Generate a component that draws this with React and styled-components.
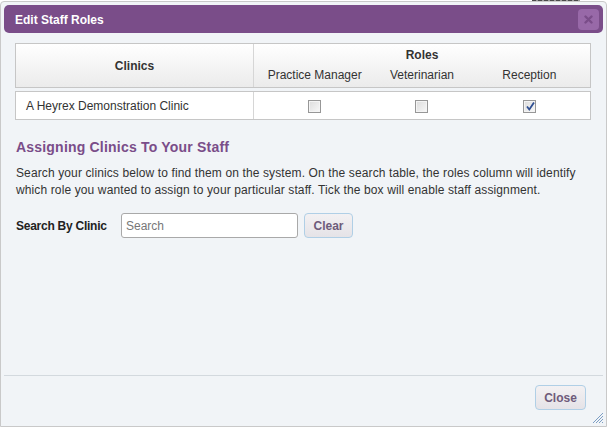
import React from "react";
import styled, { createGlobalStyle } from "styled-components";

const Global = createGlobalStyle`
  html, body { margin: 0; padding: 0; background: #ffffff; }
  body { font-family: "Liberation Sans", Arial, sans-serif; font-size: 12px; color: #333; }
  * { box-sizing: border-box; }
`;

const Page = styled.div`
  position: relative;
  width: 607px;
  height: 427px;
  padding-top: 1px;
  overflow: hidden;
`;

const Behind = styled.div`
  position: absolute;
  top: 0;
  left: 532px;
  width: 48px;
  height: 2px;
  background: repeating-linear-gradient(90deg, #4a4a4a 0 4px, #9a9a9a 4px 6px);
`;

const Dialog = styled.div`
  position: relative;
  width: 607px;
  height: 426px;
  border: 1px solid #c9c9c9;
  border-radius: 4px 4px 0 0;
  background: #f1f4f7;
  padding: 3px;
  display: flex;
  flex-direction: column;
`;

const TitleBar = styled.div`
  height: 28px;
  border-radius: 5px;
  background: #7a4d89;
  display: flex;
  align-items: center;
  justify-content: space-between;
  padding: 0 4px 0 11px;
  flex-shrink: 0;
`;

const Title = styled.span`
  color: #ffffff;
  font-weight: bold;
  font-size: 12px;
  margin-top: 1px;
`;

const CloseX = styled.div`
  width: 21px;
  height: 21px;
  border-radius: 4px;
  background: #9869a8;
  display: flex;
  align-items: center;
  justify-content: center;
`;

const Content = styled.div`
  flex: 1;
  padding: 10px 12px 0 11px;
  display: flex;
  flex-direction: column;
`;

const HeaderBox = styled.div`
  height: 45px;
  border: 1px solid #c6c6c6;
  background: linear-gradient(#ffffff, #ebebeb);
  display: grid;
  grid-template-columns: 238px 1fr;
`;

const HeadCell = styled.div`
  display: flex;
  align-items: center;
  justify-content: center;
  font-weight: bold;
  color: #333;
  border-right: ${(p) => (p.$divider ? "1px solid #d6d6d6" : "none")};
`;

const RolesHead = styled.div`
  display: flex;
  flex-direction: column;
  align-items: stretch;
  padding: 4px 7px 0;
`;

const RolesTitle = styled.div`
  text-align: center;
  font-weight: bold;
  color: #333;
  line-height: 15px;
`;

const RoleCols = styled.div`
  display: grid;
  grid-template-columns: repeat(3, 1fr);
  margin-top: 5px;
`;

const RoleLabel = styled.div`
  text-align: center;
  color: #333;
  line-height: 15px;
`;

const BodyRow = styled.div`
  margin-top: 3px;
  height: 29px;
  border: 1px solid #c6c6c6;
  background: #ffffff;
  display: grid;
  grid-template-columns: 238px 1fr;
`;

const ClinicCell = styled.div`
  display: flex;
  align-items: center;
  padding-left: 10px;
  color: #333;
  border-right: 1px solid #d6d6d6;
`;

const CheckCols = styled.div`
  display: grid;
  grid-template-columns: repeat(3, 1fr);
  padding: 0 7px;
  align-items: center;
`;

const CheckWrap = styled.div`
  display: flex;
  justify-content: center;
  padding-top: 1px;
`;

const Box = styled.span`
  position: relative;
  width: 13px;
  height: 13px;
  border: 1px solid #979797;
  background: linear-gradient(135deg, #dcdcdc, #f8f8f8);
  box-shadow: inset 0 0 0 1px #f4f4f4;
  display: block;
`;

const CheckMark = styled.svg`
  position: absolute;
  left: 1px;
  top: 0px;
`;

const Heading = styled.h3`
  margin: 18px 0 0 1px;
  font-size: 14px;
  line-height: 18px;
  font-weight: bold;
  letter-spacing: 0.2px;
  color: #7a4d89;
`;

const Para = styled.p`
  margin: 9px 0 0 1px;
  font-size: 12px;
  line-height: 17px;
  letter-spacing: 0.12px;
  color: #333;
`;

const SearchRow = styled.div`
  margin: 14px 0 0 1px;
  display: flex;
  align-items: center;
`;

const SearchLabel = styled.label`
  width: 105px;
  font-weight: bold;
  letter-spacing: -0.25px;
  color: #222;
`;

const Input = styled.input`
  width: 177px;
  height: 25px;
  border: 1px solid #a9a9a9;
  border-radius: 3px;
  padding: 0 4px;
  font-family: "Liberation Sans", Arial, sans-serif;
  font-size: 12px;
  color: #333;
  background: #fff;
  &::placeholder { color: #777; }
`;

const Button = styled.button`
  margin-left: ${(p) => p.$ml || 0}px;
  height: 25px;
  width: ${(p) => p.$w}px;
  border: 1px solid #b0cfe6;
  border-radius: 4px;
  background: linear-gradient(#f3f1f3, #e5e3e7);
  color: #6e5b7a;
  font-family: "Liberation Sans", Arial, sans-serif;
  font-weight: bold;
  font-size: 12px;
  padding: 0;
`;

const Footer = styled.div`
  height: 48px;
  border-top: 1px solid #d3d9de;
  display: flex;
  justify-content: flex-end;
  align-items: flex-start;
  padding: 9px 17px 0 0;
  flex-shrink: 0;
`;

const Grip = styled.svg`
  position: absolute;
  right: 2px;
  bottom: 2px;
`;

const Checkbox = ({ checked }) => (
  <CheckWrap>
    <Box>
      {checked && (
        <CheckMark width="11" height="11" viewBox="0 0 11 11">
          <path d="M2 5.5 L4.3 8.5 L9 1.5" stroke="#2f4f92" strokeWidth="1.8" fill="none" />
        </CheckMark>
      )}
    </Box>
  </CheckWrap>
);

export default function App() {
  return (
    <>
      <Global />
      <Page>
        <Behind />
        <Dialog>
          <TitleBar>
            <Title>Edit Staff Roles</Title>
            <CloseX>
              <svg width="9" height="9" viewBox="0 0 9 9">
                <path d="M1.5 1.5 L7.5 7.5 M7.5 1.5 L1.5 7.5" stroke="#7a4d89" strokeWidth="2.4" strokeLinecap="round" />
              </svg>
            </CloseX>
          </TitleBar>
          <Content>
            <HeaderBox>
              <HeadCell $divider>Clinics</HeadCell>
              <RolesHead>
                <RolesTitle>Roles</RolesTitle>
                <RoleCols>
                  <RoleLabel>Practice Manager</RoleLabel>
                  <RoleLabel>Veterinarian</RoleLabel>
                  <RoleLabel>Reception</RoleLabel>
                </RoleCols>
              </RolesHead>
            </HeaderBox>
            <BodyRow>
              <ClinicCell>A Heyrex Demonstration Clinic</ClinicCell>
              <CheckCols>
                <Checkbox />
                <Checkbox />
                <Checkbox checked />
              </CheckCols>
            </BodyRow>
            <Heading>Assigning Clinics To Your Staff</Heading>
            <Para>
              Search your clinics below to find them on the system. On the search table, the roles column will identify
              <br />
              which role you wanted to assign to your particular staff. Tick the box will enable staff assignment.
            </Para>
            <SearchRow>
              <SearchLabel>Search By Clinic</SearchLabel>
              <Input placeholder="Search" />
              <Button $ml={6} $w={49}>Clear</Button>
            </SearchRow>
          </Content>
          <Footer>
            <Button $w={51}>Close</Button>
          </Footer>
          <Grip width="12" height="12" viewBox="0 0 12 12">
            <path d="M11 1 L1 11 M11 4 L4 11 M11 7 L7 11 M11 10 L10 11" stroke="#7d9ec4" strokeWidth="1" />
          </Grip>
        </Dialog>
      </Page>
    </>
  );
}
